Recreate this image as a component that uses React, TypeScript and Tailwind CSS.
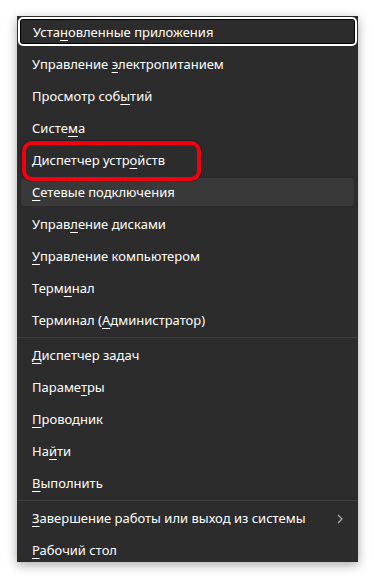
import React from 'react';

interface MenuItem {
    pre: string;
    key: string;
    post: string;
    sub?: boolean;
}

const groups: MenuItem[][] = [
    [
        { pre: 'Уста', key: 'н', post: 'овленные приложения' },
        { pre: 'Управление ', key: 'э', post: 'лектропитанием' },
        { pre: 'Просмотр соб', key: 'ы', post: 'тий' },
        { pre: 'Систе', key: 'м', post: 'а' },
        { pre: 'Диспетчер устр', key: 'о', post: 'йств' },
        { pre: '', key: 'С', post: 'етевые подключения' },
        { pre: 'Управ', key: 'л', post: 'ение дисками' },
        { pre: '', key: 'У', post: 'правление компьютером' },
        { pre: 'Терм', key: 'и', post: 'нал' },
        { pre: 'Терминал (', key: 'А', post: 'дминистратор)' },
    ],
    [
        { pre: '', key: 'Д', post: 'испетчер задач' },
        { pre: 'Параме', key: 'т', post: 'ры' },
        { pre: '', key: 'П', post: 'роводник' },
        { pre: 'На', key: 'й', post: 'ти' },
        { pre: '', key: 'В', post: 'ыполнить' },
    ],
    [
        { pre: '', key: 'З', post: 'авершение работы или выход из системы', sub: true },
        { pre: '', key: 'Р', post: 'абочий стол' },
    ],
];

const Label: React.FC<{ item: MenuItem }> = ({ item }) => (
    <span className="whitespace-pre">
        {item.pre}
        <u className="underline decoration-1 underline-offset-[3px]">{item.key}</u>
        {item.post}
    </span>
);

const Row: React.FC<{ item: MenuItem; focused?: boolean; hovered?: boolean }> = ({ item, focused, hovered }) => {
    if (focused) {
        return (
            <div className="h-8 pt-[1px] pb-[2px] px-[1px]">
                <div className="h-full flex items-center pl-[13px] pt-[2px] rounded-[5px] border-2 border-white shadow-[inset_0_0_0_1px_#000]">
                    <Label item={item} />
                </div>
            </div>
        );
    }
    return (
        <div className="h-8 pt-[2px] pb-[2px] px-1">
            <div className={`h-full flex items-center pl-[11px] pr-[11px] pt-[1px] rounded-[4px] ${hovered ? 'bg-[#393939]' : ''}`}>
                <span className="flex-1"><Label item={item} /></span>
                {item.sub && (
                    <svg width="6" height="10" viewBox="0 0 6 10">
                        <path d="M1 1 L5 5 L1 9" fill="none" stroke="#a8a8a8" strokeWidth="1.3" />
                    </svg>
                )}
            </div>
        </div>
    );
};

const App: React.FC = () => {
    return (
        <div className="w-[374px] h-[578px] bg-white relative overflow-hidden" style={{ fontFamily: '"Noto Sans", "Open Sans", sans-serif' }}>
            <div className="absolute left-[17px] top-[16px] w-[341px] h-[546px] bg-[#2c2c2c] text-white text-[13px] overflow-hidden shadow-[0_3px_10px_rgba(0,0,0,0.35)]">
                {groups.map((group, gi) => (
                    <div key={gi}>
                        {gi > 0 && <div className="h-px my-[1px] bg-[#3e3e3e]" />}
                        {group.map((item, i) => (
                            <Row key={i} item={item} focused={gi === 0 && i === 0} hovered={gi === 0 && i === 5} />
                        ))}
                    </div>
                ))}
            </div>
            {/* annotation */}
            <div className="absolute left-[22px] top-[141px] w-[179px] h-[40px] rounded-[10px] border-[4px] border-[#f00010] shadow-[0_0_2px_rgba(0,0,0,0.7)]" />
        </div>
    );
};

export default App;
